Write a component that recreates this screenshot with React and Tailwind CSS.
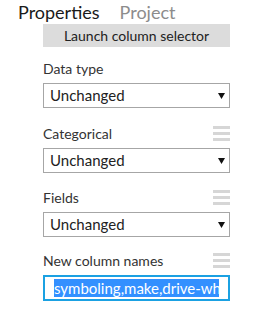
const Handle = () => (
  <div className="flex flex-col gap-[3px] w-[17px]">
    <div className="h-[3px] bg-[#d6d6d6]" />
    <div className="h-[3px] bg-[#d6d6d6]" />
    <div className="h-[3px] bg-[#d6d6d6]" />
  </div>
);

const Select = ({ value }) => (
  <div className="h-[25px] border border-[#a6a6a6] flex items-center justify-between pl-[6px] pr-[4px] text-[15px] text-[#222]">
    <span>{value}</span>
    <svg width="7" height="6" viewBox="0 0 7 6">
      <polygon points="0,0 7,0 3.5,6" fill="#111" />
    </svg>
  </div>
);

const Field = ({ label, handle, children, top }) => (
  <div className={top}>
    <div className="h-[18px] flex items-center justify-between text-[14px] text-[#333]">
      <span>{label}</span>
      {handle && <Handle />}
    </div>
    <div className="mt-[6px]">{children}</div>
  </div>
);

export default function App() {
  return (
    <div className="w-[270px] h-[319px] bg-white overflow-hidden font-['Lato',sans-serif]">
      <div className="h-[24px] flex items-end pl-[18px] gap-[20px] text-[18px] leading-[24px]">
        <span className="text-[#1a1a1a]">Properties</span>
        <span className="text-[#8c8c8c]">Project</span>
      </div>
      <div className="ml-[43px] w-[187px]">
        <div className="h-[23px] bg-[#dcdcdc] flex items-center justify-center text-[14px] text-[#222]">
          Launch column selector
        </div>
        <Field label="Data type" top="mt-[12px]">
          <Select value="Unchanged" />
        </Field>
        <Field label="Categorical" handle top="mt-[16px]">
          <Select value="Unchanged" />
        </Field>
        <Field label="Fields" handle top="mt-[15px]">
          <Select value="Unchanged" />
        </Field>
        <Field label="New column names" handle top="mt-[14px]">
          <div className="h-[26px] border-2 border-[#1ba1e2] flex items-center pl-[9px]">
            <div className="w-[165px] overflow-hidden whitespace-nowrap">
              <span className="bg-[#3390ff] text-white text-[15px] leading-[17px]">
                symboling,make,drive-wheels,engine-location
              </span>
            </div>
          </div>
        </Field>
      </div>
    </div>
  );
}
